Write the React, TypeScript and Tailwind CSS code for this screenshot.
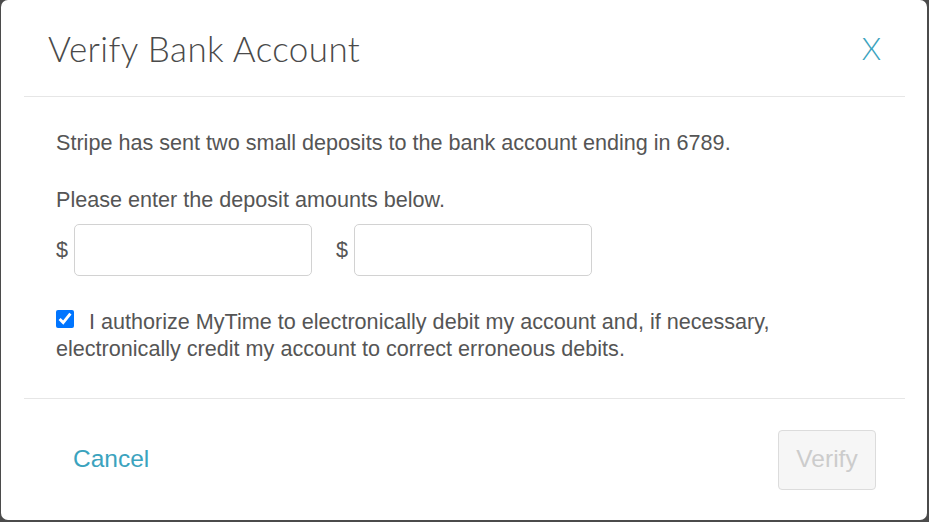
import { useState } from "react";

export default function App() {
  const [agreed, setAgreed] = useState(true);

  return (
    <div className="h-[522px] w-[929px] overflow-hidden bg-[#4b4b4b] pb-[2px] pl-[1px] pr-[2px]">
      <div className="flex h-full flex-col rounded-[7px] bg-white font-['Liberation_Sans',Arial,sans-serif] text-[#555]">
        {/* header */}
        <div className="flex h-[96px] items-center justify-between pl-[47px] pr-[46px]">
          <h2 className="font-['Lato',sans-serif] text-[35px] font-light tracking-[0.4px] text-[#4a4a4a]">
            Verify Bank Account
          </h2>
          <button className="font-['Lato',sans-serif] text-[31px] font-light text-[#3ba3be]">
            X
          </button>
        </div>
        <div className="ml-[23px] mr-[22px] border-t border-[#e6e6e6]" />

        {/* body */}
        <div className="flex flex-col pl-[55px] pt-[32px] text-[21.6px]">
          <p className="leading-[27px]">
            Stripe has sent two small deposits to the bank account ending in 6789.
          </p>
          <p className="mt-[30px] leading-[27px]">
            Please enter the deposit amounts below.
          </p>
          <div className="mt-[11px] flex items-center gap-[24px]">
            <label className="flex items-center gap-[6px]">
              <span className="text-[#555]">$</span>
              <input
                type="text"
                className="h-[52px] w-[238px] rounded-[5px] border border-[#d2d2d2] px-3 outline-none"
              />
            </label>
            <label className="flex items-center gap-[6px]">
              <span className="text-[#555]">$</span>
              <input
                type="text"
                className="h-[52px] w-[238px] rounded-[5px] border border-[#d2d2d2] px-3 outline-none"
              />
            </label>
          </div>
          <label className="mt-[32px] block pr-[120px] leading-[27px]">
            <input
              type="checkbox"
              checked={agreed}
              onChange={(e) => setAgreed(e.target.checked)}
              className="relative -top-[1px] m-0 mr-[15px] h-[18px] w-[18px] accent-[#0075ff]"
            />
            I authorize MyTime to electronically debit my account and, if necessary,
            electronically credit my account to correct erroneous debits.
          </label>
        </div>

        <div className="ml-[23px] mr-[22px] mt-[36px] border-t border-[#e6e6e6]" />

        {/* footer */}
        <div className="flex flex-1 items-center justify-between pl-[72px] pr-[51px]">
          <button className="text-[24.5px] text-[#3ba3be]">Cancel</button>
          <button
            disabled
            className="h-[60px] w-[98px] rounded-[4px] border border-[#dcdcdc] bg-[#f6f6f6] text-[24.5px] text-[#cccccc]"
          >
            Verify
          </button>
        </div>
      </div>
    </div>
  );
}
